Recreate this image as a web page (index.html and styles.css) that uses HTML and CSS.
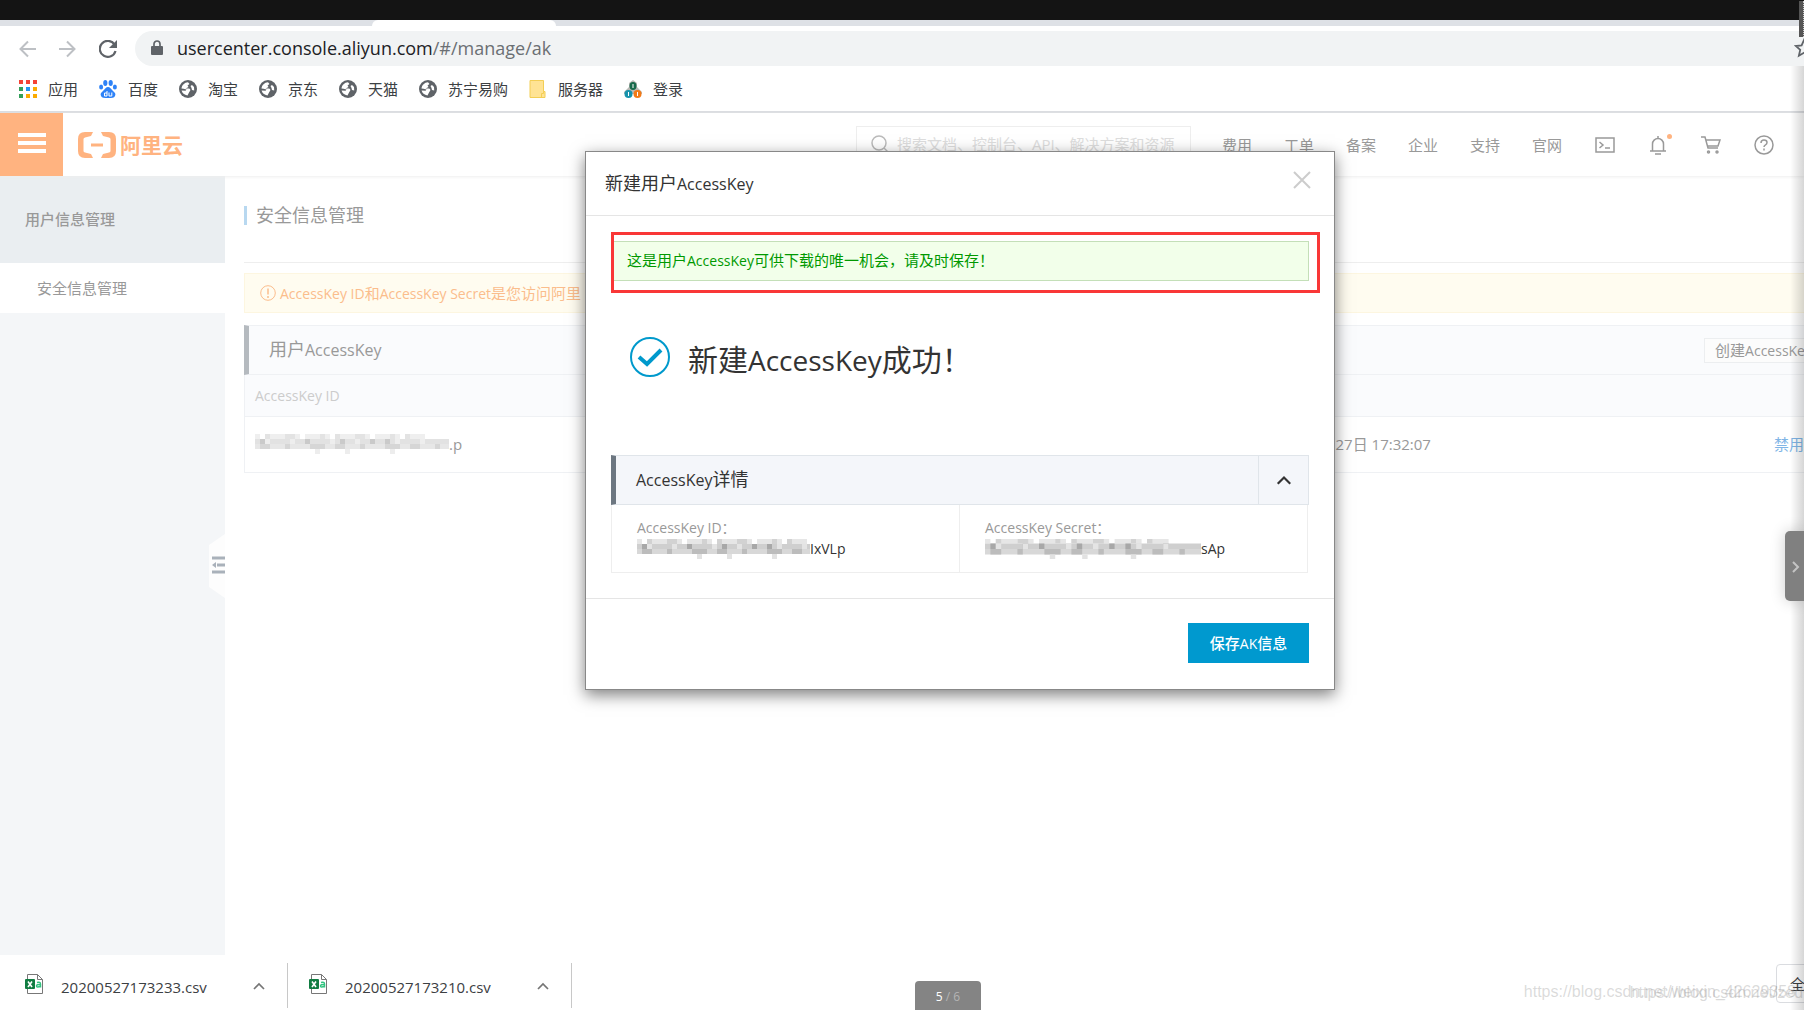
FILE: index.html
```html
<!DOCTYPE html>
<html lang="zh-CN">
<head>
<meta charset="utf-8">
<title>安全信息管理</title>
<link rel="stylesheet" href="styles.css">
</head>
<body>
<svg class="defs" width="0" height="0" aria-hidden="true">
  <symbol id="globe" viewBox="0 0 18 18">
    <circle cx="9" cy="9" r="9" fill="#5f6368"/>
    <path d="M2.500 8.500C3 5 5.500 2.600 9 2.300L10.500 4 8.500 5.500 9.500 7 6.500 8.500H10c1.800.5 1.600 2.500.4 3.200L8.500 15.500C5.500 15 3 13 2.600 10.500L6.500 10.800 7.500 9.600 4.500 8.800z" fill="#fff"/>
    <path d="M11.500 6l1.500-1 2 2 .2 3.500-2.200-.6-.5-1.900z" fill="#fff"/>
  </symbol>
  <symbol id="csv" viewBox="0 0 18 20">
    <path d="M2.500.5h10l5 5v14h-15z" fill="#fff" stroke="#777"/>
    <path d="M12.500.5v5h5" fill="none" stroke="#777"/>
    <rect y="5" width="10" height="10" rx="1" fill="#107c41"/>
    <path d="M3 7.500l4 5.500M7 7.500l-4 5.500" stroke="#fff" stroke-width="1.600"/>
    <path d="M12 8.500q3.500-1 3.500 1.500v3.500M15.500 10.500q-4-.3-4 1.500t4 .3" fill="none" stroke="#33c481" stroke-width="1.500"/>
  </symbol>
  <symbol id="up" viewBox="0 0 12 8"><path d="M1 7l5-5 5 5" fill="none" stroke="currentColor" stroke-width="1.700"/></symbol>
  <symbol id="mosaic" viewBox="0 0 200 20" preserveAspectRatio="xMinYMid slice">
    <g fill="none" stroke-width="5">
      <path d="M0 2.500h172" stroke="#e6e6e6" stroke-dasharray="5 5 20 5 10 5 15 5"/>
      <path d="M10 2.500h160" stroke="#d2d2d2" stroke-dasharray="5 15 10 25 5 10"/>
      <path d="M0 7.500h200" stroke="#cfcfcf"/>
      <path d="M5 7.500h190" stroke="#a8a8a8" stroke-dasharray="5 25 5 10 5 30"/>
      <path d="M10 7.500h190" stroke="#e4e4e4" stroke-dasharray="5 20 5 35"/>
      <path d="M0 12.500h200" stroke="#d8d8d8"/>
      <path d="M5 12.500h190" stroke="#bcbcbc" stroke-dasharray="10 15 5 20 15 10"/>
      <path d="M60 17.500h90" stroke="#e2e2e2" stroke-dasharray="5 25 5 40"/>
    </g>
  </symbol>
</svg>

<div class="viewer-bar"></div>
<div class="tabstrip"><div class="tab"></div></div>

<div class="toolbar">
  <button class="tool" aria-label="后退"><svg width="17" height="18" viewBox="0 0 17 18"><path d="M17 9H2M9 1.500L1.500 9 9 16.500" fill="none" stroke="#bdc0c4" stroke-width="2"/></svg></button>
  <button class="tool" aria-label="前进"><svg width="17" height="18" viewBox="0 0 17 18"><path d="M0 9h15M8 1.500L15.500 9 8 16.500" fill="none" stroke="#bdc0c4" stroke-width="2"/></svg></button>
  <button class="tool" aria-label="刷新"><svg width="18" height="18" viewBox="0 0 18 18"><path d="M15.500 4.500A8 8 0 1 0 16.500 11" fill="none" stroke="#5f6368" stroke-width="2.200"/><path d="M18 0v8h-8z" fill="#5f6368"/></svg></button>
  <div class="omnibox">
    <svg width="12" height="16" viewBox="0 0 12 16"><path d="M3 7V4a3 3 0 0 1 6 0v3" fill="none" stroke="#5f6368" stroke-width="1.700"/><rect y="6" width="12" height="9" rx="1" fill="#5f6368"/></svg>
    <span class="url">usercenter.console.aliyun.com<span class="path">/#/manage/ak</span></span>
    <svg class="star" width="20" height="20" viewBox="0 0 20 20"><path d="M10 2l2.400 5.400 5.800.6-4.400 3.900 1.300 5.800L10 14.700l-5.100 3 1.300-5.800L1.800 8l5.800-.6z" fill="none" stroke="#5f6368" stroke-width="1.800"/></svg>
  </div>
</div>

<nav class="bookmarks">
  <a href="#"><svg width="18" height="18" viewBox="0 0 18 18"><path d="M0 0h4v4H0zM7 0h4v4H7zM14 0h4v4h-4z" fill="#f44336"/><path d="M0 7h4v4H0zM0 14h4v4H0z" fill="#34a05a"/><path d="M7 7h4v4H7z" fill="#2196f3"/><path d="M14 7h4v4h-4zM7 14h4v4H7zM14 14h4v4h-4z" fill="#fbab00"/></svg>应用</a>
  <a href="#"><svg width="18" height="18" viewBox="0 0 18 18" fill="#2e82f7"><ellipse cx="6.300" cy="3" rx="2.100" ry="2.900"/><ellipse cx="11.700" cy="3" rx="2.100" ry="2.900"/><ellipse cx="2.100" cy="7" rx="2" ry="2.600"/><ellipse cx="15.900" cy="7" rx="2" ry="2.600"/><path d="M9 7c2 0 3 2 5 4 2 1.500 3 3 2 5s-3 2-7 2-6 0-7-2 0-3.500 2-5c2-2 3-4 5-4z"/><path d="M8 11v5H5.500v-3H8M10 12.500V16h2.800v-3.500" fill="none" stroke="#fff"/></svg>百度</a>
  <a href="#"><svg width="18" height="18"><use href="#globe"/></svg>淘宝</a>
  <a href="#"><svg width="18" height="18"><use href="#globe"/></svg>京东</a>
  <a href="#"><svg width="18" height="18"><use href="#globe"/></svg>天猫</a>
  <a href="#"><svg width="18" height="18"><use href="#globe"/></svg>苏宁易购</a>
  <a href="#"><svg width="18" height="18" viewBox="0 0 18 18"><path d="M1 .5h13.500v11h1.500v6H1z" fill="#ffe394" stroke="#f3ce55"/><path d="M12.500 17v-3.500h2v-2" fill="none" stroke="#f3ce55"/></svg>服务器</a>
  <a href="#"><svg width="18" height="18" viewBox="0 0 18 18"><path d="M9 0l4 3v4l5 5v2H0v-2l5-5V3z" fill="#b9b9b5"/><ellipse cx="9" cy="6" rx="3.500" ry="4" fill="#17694b"/><circle cx="4.500" cy="14" r="4" fill="#1793ad"/><circle cx="13.500" cy="14" r="4" fill="#f47a16"/><path d="M9 4v4M4.500 12v4M13.500 12v4" stroke="#fff"/></svg>登录</a>
</nav>

<div class="page">
  <header class="topbar">
    <button class="burger" aria-label="菜单"><span></span><span></span><span></span></button>
    <a class="logo" href="#"><svg width="38" height="26" viewBox="0 0 38 26"><path d="M15 0H7Q0 0 0 7v12q0 7 7 7h8l-2-4-6-1.500Q5.500 20 5.500 19V7q0-1 1.500-1.500L13 4zM23 0h8q7 0 7 7v12q0 7-7 7h-8l2-4 6-1.500q1.500-.5 1.500-1.500V7q0-1-1.500-1.500L25 4zM13 11.500h12v3H13z" fill="#ffb380"/></svg><span>阿里云</span></a>
    <label class="search"><svg width="18" height="18" viewBox="0 0 18 18"><circle cx="8" cy="8" r="7" fill="none" stroke="#bbb" stroke-width="1.500"/><path d="M13 13l4 4" stroke="#bbb" stroke-width="1.500"/></svg><input type="text" aria-label="搜索" placeholder="搜索文档、控制台、API、解决方案和资源"></label>
    <nav class="topnav">
      <a href="#">费用</a><a href="#">工单</a><a href="#">备案</a><a href="#">企业</a><a href="#">支持</a><a href="#">官网</a>
    </nav>
    <div class="topicons">
      <button aria-label="终端"><svg width="20" height="20" viewBox="0 0 20 20"><path d="M1 3h18v14H1zM4.500 7l3.500 3-3.500 3M10 13h5"/></svg></button>
      <button aria-label="通知"><svg width="20" height="20" viewBox="0 0 20 20"><path d="M2 16h16M4.500 16V9a5.500 5.500 0 0 1 11 0v7M10 1v3M7 19h6"/></svg><i class="dot"></i></button>
      <button aria-label="购物车"><svg width="20" height="20" viewBox="0 0 20 20"><path d="M0 2h4l3 11h10M5 5h14l-2 6H6"/><circle cx="7.500" cy="17" r="1"/><circle cx="16" cy="17" r="1"/></svg></button>
      <button aria-label="帮助"><svg width="20" height="20" viewBox="0 0 20 20"><circle cx="10" cy="10" r="9"/><path d="M7 8q0-3 3-3t3 2.500q0 1.500-1.500 2.300T10 12M10 13.500v2"/></svg></button>
    </div>
  </header>

  <div class="columns">
    <aside class="sidebar">
      <h2>用户信息管理</h2>
      <a href="#">安全信息管理</a>
      <button class="collapse" aria-label="收起"><svg width="16" height="64" viewBox="0 0 16 64"><path d="M16 0L0 11v42l16 11z" fill="#fdfdfd"/><path d="M3 24h13M8 31h8M3 38h13" stroke="#a9b1ba" stroke-width="3"/><path d="M7 28v6l-4-3z" fill="#a9b1ba"/></svg></button>
    </aside>
    <main class="main">
      <h1>安全信息管理</h1>
      <p class="warning"><svg width="16" height="16" viewBox="0 0 16 16"><circle cx="8" cy="8" r="7.300" fill="none" stroke="#fbbd8c"/><path d="M8 3.500v6M8 11v2" stroke="#fbbd8c" stroke-width="1.500"/></svg><span><span class="latin">AccessKey ID</span>和<span class="latin">AccessKey Secret</span>是您访问阿里</span></p>
      <section class="keys">
        <div class="keys-head"><h3>用户<span class="latin">AccessKey</span></h3><button class="create">创建<span class="latin">AccessKey</span></button></div>
        <table>
          <thead><tr><th><span class="latin">AccessKey ID</span></th><th></th><th></th></tr></thead>
          <tbody><tr>
            <td><span class="masked"><svg class="blur pale" width="194" height="20"><use href="#mosaic"/></svg>.p</span></td>
            <td class="date">27日 17:32:07</td>
            <td class="action"><a href="#">禁用</a></td>
          </tr></tbody>
        </table>
      </section>
    </main>
  </div>

  <div class="overlay">
    <div class="modal" role="dialog" aria-labelledby="dlg">
      <div class="modal-head"><h2 id="dlg">新建用户<span class="latin">AccessKey</span></h2><button class="close" aria-label="关闭"><svg width="18" height="18" viewBox="0 0 18 18"><path d="M1 1l16 16M17 1L1 17" stroke="#ccc" stroke-width="2"/></svg></button></div>
      <div class="modal-body">
        <div class="marker"><p class="notice">这是用户<span class="latin">AccessKey</span>可供下载的唯一机会，请及时保存！</p></div>
        <div class="success"><svg width="40" height="40" viewBox="0 0 40 40"><circle cx="20" cy="20" r="19" fill="none" stroke="#09c" stroke-width="2"/><path d="M9 20l8 7 14-14" fill="none" stroke="#09c" stroke-width="4"/></svg><strong>新建<span class="latin">AccessKey</span>成功！</strong></div>
        <div class="detail-head"><h3><span class="latin">AccessKey</span>详情</h3><button aria-label="收起详情"><svg width="16" height="10"><use href="#up"/></svg></button></div>
        <dl class="detail">
          <div><dt>AccessKey ID：</dt><dd><svg class="blur" width="173" height="20"><use href="#mosaic"/></svg>IxVLp</dd></div>
          <div><dt>AccessKey Secret：</dt><dd><svg class="blur" width="216" height="20"><use href="#mosaic"/></svg>sAp</dd></div>
        </dl>
      </div>
      <div class="modal-foot"><button class="save">保存<span class="latin">AK</span>信息</button></div>
    </div>
  </div>
</div>

<footer class="downloads">
  <div class="item"><svg width="18" height="20"><use href="#csv"/></svg><a href="#">20200527173233.csv</a><button aria-label="更多"><svg width="12" height="8"><use href="#up"/></svg></button></div>
  <div class="item"><svg width="18" height="20"><use href="#csv"/></svg><a href="#">20200527173210.csv</a><button aria-label="更多"><svg width="12" height="8"><use href="#up"/></svg></button></div>
  <button class="all">全部显示</button>
</footer>

<div class="edge"></div>
<div class="grip"></div>
<button class="next" aria-label="下一张"><svg width="8" height="12" viewBox="0 0 8 12"><path d="M1 1l5 5-5 5" fill="none" stroke="#c4c4c4" stroke-width="2"/></svg></button>
<div class="counter"><b>5</b> / 6</div>
<div class="watermark first">https://blog.csdn.net/weixin_42629358</div>
<div class="watermark second">https://blog.csdn.net/zedwei7</div>
</body>
</html>
```
FILE: styles.css
```css
* { box-sizing: border-box; }

body {
  margin: 0;
  height: 100vh;
  display: flex;
  flex-direction: column;
  position: relative;
  overflow: hidden;
  background: #fff;
  color: #333;
  font: 15px/20px "Open Sans", "Noto Sans CJK SC", sans-serif;
}

button { padding: 0; border: 0; background: none; font: inherit; color: inherit; }
h1, h2, h3, p, dl, dd { margin: 0; font-weight: 400; }
a { color: inherit; text-decoration: none; }
svg { display: block; flex: none; }
.defs { position: absolute; }
.latin { font-size: 14px; }

/* browser frame */
.viewer-bar { flex: none; height: 20px; background: #141414; }
.tabstrip { flex: none; height: 6px; background: #dee1e6; }
.tab { width: 184px; height: 6px; margin-left: 372px; background: #fff; border-radius: 6px 6px 0 0; }

.toolbar { flex: none; display: flex; align-items: center; height: 45px; padding-left: 19px; gap: 23px; }
.tool { width: 17px; }
.omnibox {
  flex: 1;
  display: flex;
  align-items: center;
  gap: 14px;
  height: 35px;
  margin-left: -4px;
  margin-right: -40px;
  padding: 0 30px 2px 16px;
  border-radius: 18px 0 0 18px;
  background: #f1f3f4;
}
.url { flex: 1; font-size: 18px; color: #202124; }
.path { color: #6b6f73; }

.bookmarks {
  flex: none;
  display: flex;
  gap: 21px;
  height: 42px;
  padding: 8px 19px 0;
  border-bottom: 2px solid #dadce0;
  color: #3c4043;
}
.bookmarks a { display: flex; gap: 11px; height: 20px; align-items: center; }

/* console page */
.page { flex: 1; min-height: 0; display: flex; flex-direction: column; position: relative; color: #999; }
.topbar { flex: none; display: flex; align-items: center; height: 63px; padding-right: 30px; box-shadow: 0 1px 3px #eee; z-index: 1; }
.burger { width: 63px; height: 63px; background: #ffb380; display: flex; flex-direction: column; align-items: center; gap: 4px; padding-top: 20px; }
.burger span { width: 28px; height: 4px; background: #fff; }
.logo { display: flex; align-items: center; gap: 4px; margin: 0 auto 0 15px; color: #ffb380; font-size: 21px; font-weight: 700; }
.search { display: flex; align-items: center; gap: 8px; width: 335px; height: 38px; padding: 0 0 2px 14px; border: 1px solid #eee; margin-right: 31px; }
.search input { flex: 1; min-width: 0; border: 0; padding: 0; background: none; font: inherit; }
.search input::placeholder { color: #ddd; opacity: 1; }
.topnav { display: flex; gap: 32px; margin-right: 33px; }
.topicons { display: flex; gap: 33px; }
.topicons button { position: relative; }
.topicons svg { fill: none; stroke: #999; stroke-width: 1.500; }
.dot { position: absolute; right: -4px; top: -1px; width: 5px; height: 5px; border-radius: 50%; background: #ffb380; }

.columns { flex: 1; display: flex; min-height: 0; }
.sidebar { width: 225px; background: #f4f6f8; position: relative; flex: none; }
.sidebar h2 { height: 87px; padding-left: 25px; background: #eaeef1; font-size: 15px; line-height: 87px; font-weight: 500; }
.sidebar a { display: block; padding-left: 37px; line-height: 50px; background: #fff; }
.collapse { position: absolute; right: 0; top: 358px; }

.main { flex: 1; min-width: 0; padding: 0 0 0 19px; margin-right: -40px; }
.main h1 { height: 87px; padding: 30px 0 0; border-bottom: 1px solid #eee; font-size: 18px; line-height: 19px; }
.main h1::before { content: ""; float: left; width: 3px; height: 19px; margin-right: 9px; background: #b8d8f0; }
.warning { display: flex; align-items: center; gap: 4px; height: 40px; margin-top: 10px; padding-left: 15px; border: 1px solid #fdf6e0; background: #fffcf0; color: #fbbd8c; }
.keys { margin-top: 12px; }
.keys-head { display: flex; align-items: center; justify-content: space-between; height: 50px; padding: 0 20px; border: 1px solid #eff1f4; border-left: 5px solid #b5babf; background: #fafbfd; }
.keys-head h3 { font-size: 18px; padding-bottom: 2px; }
.keys-head h3 .latin, .modal-head .latin, .detail-head .latin { font-size: 16px; }
.create { height: 25px; padding: 0 10px; border: 1px solid #eceef0; background: #fcfcfc; line-height: 21px; }
table { width: 100%; border-collapse: collapse; table-layout: fixed; }
th, td { padding: 0 10px; text-align: left; font-weight: 400; border-bottom: 1px solid #eff1f4; }
thead { background: #fafbfd; color: #ccc; }
th { height: 41px; }
td { height: 56px; }
table { border-left: 1px solid #eff1f4; }
th:first-child { width: 1081px; }
th:last-child { width: 80px; }
.masked { display: flex; align-items: center; }
.date { white-space: nowrap; }
.action { color: #80b5e6; }
.pale { opacity: .6; }

/* dialog */
.overlay { position: absolute; inset: 0 -116px 0 0; z-index: 2; display: flex; justify-content: center; align-items: flex-start; padding-top: 38px; }
.modal { width: 750px; border: 1px solid #888; background: #fff; box-shadow: 0 5px 15px rgba(0, 0, 0, .5); color: #333; }
.modal-head { display: flex; justify-content: space-between; height: 64px; padding: 19px 23px 0 19px; border-bottom: 1px solid #e5e5e5; }
.modal-head h2 { font-size: 18px; line-height: 24px; }
.close { height: 18px; }
.modal-body { padding: 16px 25px 25px; }
.marker { margin-right: -11px; padding: 6px 8px 9px 0; border: 3px solid #f93737; }
.notice { height: 40px; padding-left: 13px; border: 1px solid #c4dfb8; border-left: 0; background: #f2ffea; color: #090; line-height: 36px; }
.success { display: flex; align-items: center; gap: 18px; height: 162px; padding: 0 0 34px 19px; }
.success strong { font-size: 30px; line-height: 40px; font-weight: 400; margin-top: 5px; }
.success .latin { font-size: 28px; }
.detail-head { display: flex; align-items: center; justify-content: space-between; height: 50px; padding-left: 20px; border: 1px solid #e0e5ea; border-left: 5px solid #6d7781; background: #f4f6fa; }
.detail-head h3 { font-size: 18px; padding-bottom: 2px; }
.detail-head button { width: 50px; height: 48px; border-left: 1px solid #e0e5ea; display: grid; place-items: center; }
.detail { display: flex; height: 68px; margin-right: 1px; border: 1px solid #eee; border-top: 0; }
.detail > div { flex: 1; padding: 13px 0 0 25px; font-size: 14px; }
.detail > div + div { border-left: 1px solid #eee; }
dt { color: #999; }
dd { display: flex; align-items: center; padding-top: 1px; }
.modal-foot { display: flex; justify-content: flex-end; height: 91px; padding: 24px 25px 0; border-top: 1px solid #e5e5e5; }
.save { width: 121px; height: 40px; background: #0099cf; color: #fff; font-weight: 500; }

/* download shelf */
.downloads { flex: none; display: flex; height: 55px; padding-top: 8px; color: #3c4043; }
.item { width: 284px; height: 45px; display: flex; align-items: center; padding: 0 22px 0 25px; border-right: 1px solid #c8c8c8; }
.item:first-child { width: 288px; }
.item:nth-child(2) { padding-left: 21px; }
.item > svg { margin-bottom: 4px; }
.item a { margin: 2px auto 0 18px; }
.item button { color: #757575; }
.all { flex: none; margin: 1px -60px 0 auto; height: 39px; padding: 0 13px; border: 1px solid #dadce0; border-radius: 4px; }

/* image viewer controls over the picture */
.edge { position: absolute; right: 0; top: 66px; bottom: 0; width: 14px; background: linear-gradient(to right, transparent, rgba(0, 0, 0, .16)); z-index: 3; }
.grip { position: absolute; right: 0; top: 1px; width: 5px; height: 36px; background: #555; border-right: 1px dotted #ccc; z-index: 4; }
.next { position: absolute; right: 0; top: 531px; width: 19px; height: 70px; padding: 2px 0 0 3px; border-radius: 5px 0 0 5px; background: #808080; display: grid; place-items: center; box-shadow: 0 0 15px rgba(0, 0, 0, .2); z-index: 4; }
.counter { position: absolute; left: 915px; bottom: 0; width: 66px; height: 29px; border-radius: 4px 4px 0 0; background: #848484; color: #b4b4b4; font-size: 12px; line-height: 31px; text-align: center; }
.counter b { color: #fff; font-weight: 400; }
.watermark { position: absolute; bottom: 8px; color: rgba(150, 150, 150, .35); font-family: "Liberation Sans", sans-serif; font-size: 16px; white-space: nowrap; }
.first { right: 8px; }
.second { right: -32px; bottom: 7px; }
```
